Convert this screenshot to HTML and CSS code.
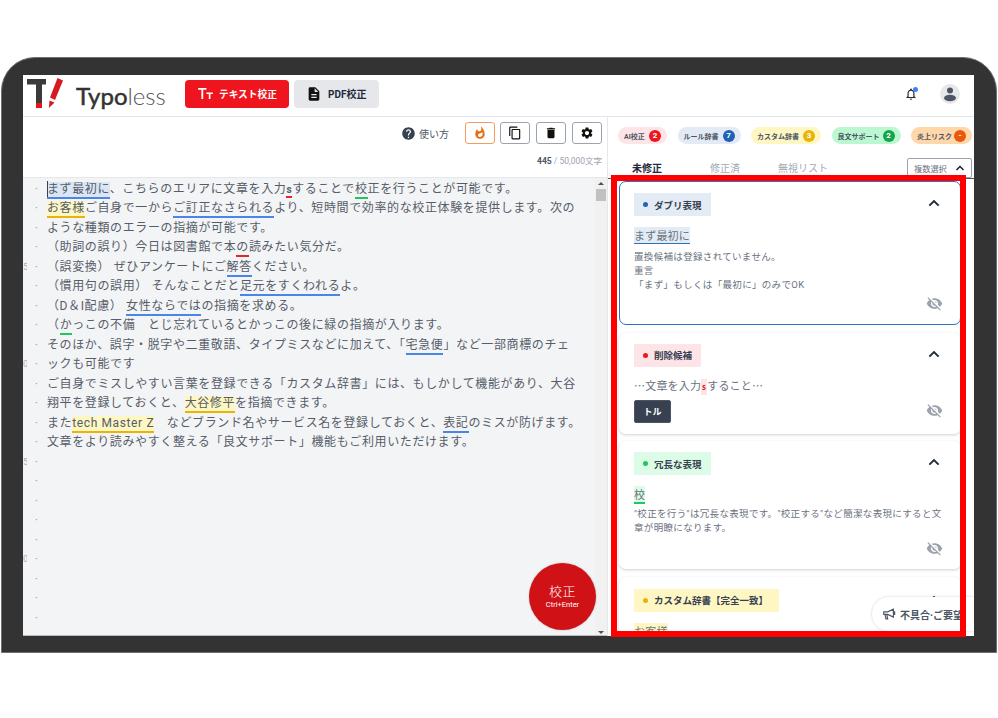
FILE: index.html
```html
<!DOCTYPE html>
<html lang="ja">
<head>
<meta charset="utf-8">
<title>Typoless</title>
<link rel="stylesheet" href="styles.css">
</head>
<body>
<svg class="defs" width="0" height="0" aria-hidden="true">
  <symbol id="i-doc" viewBox="0 0 24 24"><path d="M14 2H6c-1.1 0-2 .9-2 2v16c0 1.1.9 2 2 2h12c1.1 0 2-.9 2-2V8l-6-6zm2 16H8v-2h8v2zm0-4H8v-2h8v2zm-3-5V3.5L18.5 9H13z"/></symbol>
  <symbol id="i-help" viewBox="0 0 24 24"><path d="M12 2C6.48 2 2 6.48 2 12s4.48 10 10 10 10-4.48 10-10S17.52 2 12 2zm1 17h-2v-2h2v2zm2.07-7.75l-.9.92C13.45 12.9 13 13.5 13 15h-2v-.5c0-1.1.45-2.1 1.17-2.83l1.24-1.26c.37-.36.59-.86.59-1.41 0-1.1-.9-2-2-2s-2 .9-2 2H8c0-2.21 1.79-4 4-4s4 1.79 4 4c0 .88-.36 1.68-.93 2.25z"/></symbol>
  <symbol id="i-copy" viewBox="0 0 24 24"><path d="M16 1H4c-1.1 0-2 .9-2 2v14h2V3h12V1zm3 4H8c-1.1 0-2 .9-2 2v14c0 1.1.9 2 2 2h11c1.1 0 2-.9 2-2V7c0-1.1-.9-2-2-2zm0 16H8V7h11v14z"/></symbol>
  <symbol id="i-trash" viewBox="0 0 24 24"><path d="M6 19c0 1.1.9 2 2 2h8c1.1 0 2-.9 2-2V7H6v12zM19 4h-3.5l-1-1h-5l-1 1H5v2h14V4z"/></symbol>
  <symbol id="i-gear" viewBox="0 0 24 24"><path d="M19.14 12.94c.04-.3.06-.61.06-.94 0-.32-.02-.64-.07-.94l2.03-1.58c.18-.14.23-.41.12-.61l-1.92-3.32c-.12-.22-.37-.29-.59-.22l-2.39.96c-.5-.38-1.03-.7-1.62-.94l-.36-2.54c-.04-.24-.24-.41-.48-.41h-3.84c-.24 0-.43.17-.47.41l-.36 2.54c-.59.24-1.13.57-1.62.94l-2.39-.96c-.22-.08-.47 0-.59.22L2.74 8.87c-.12.21-.08.47.12.61l2.03 1.58c-.05.3-.09.63-.09.94s.02.64.07.94l-2.03 1.58c-.18.14-.23.41-.12.61l1.92 3.32c.12.22.37.29.59.22l2.39-.96c.5.38 1.03.7 1.62.94l.36 2.54c.05.24.24.41.48.41h3.84c.24 0 .44-.17.47-.41l.36-2.54c.59-.24 1.13-.56 1.62-.94l2.39.96c.22.08.47 0 .59-.22l1.92-3.32c.12-.22.07-.47-.12-.61l-2.01-1.58zM12 15.6c-1.98 0-3.6-1.62-3.6-3.6s1.62-3.6 3.6-3.6 3.6 1.62 3.6 3.6-1.62 3.6-3.6 3.6z"/></symbol>
  <symbol id="i-eye" viewBox="0 0 24 24"><path d="M12 7c2.76 0 5 2.24 5 5 0 .65-.13 1.26-.36 1.83l2.92 2.92c1.51-1.26 2.7-2.89 3.43-4.75-1.73-4.39-6-7.5-11-7.5-1.4 0-2.74.25-3.98.7l2.16 2.16C10.74 7.13 11.35 7 12 7zM2 4.27l2.28 2.28.46.46C3.08 8.3 1.78 10.02 1 12c1.73 4.39 6 7.5 11 7.5 1.55 0 3.03-.3 4.38-.84l.42.42L19.73 22 21 20.73 3.27 3 2 4.27zM7.53 9.8l1.55 1.55c-.05.21-.08.43-.08.65 0 1.66 1.34 3 3 3 .22 0 .44-.03.65-.08l1.55 1.55c-.67.33-1.41.53-2.2.53-2.76 0-5-2.24-5-5 0-.79.2-1.53.53-2.2zm4.31-.78l3.15 3.15.02-.16c0-1.66-1.34-3-3-3l-.17.01z"/></symbol>
  <symbol id="i-fire" viewBox="0 0 24 24"><path d="M13.5.67s.74 2.65.74 4.8c0 2.06-1.35 3.73-3.41 3.73-2.07 0-3.63-1.67-3.63-3.73l.03-.36C5.21 7.51 4 10.62 4 14c0 4.42 3.58 8 8 8s8-3.58 8-8C20 8.61 17.41 3.8 13.5.67zM11.71 19c-1.78 0-3.22-1.4-3.22-3.14 0-1.62 1.05-2.76 2.81-3.12 1.77-.36 3.6-1.21 4.62-2.58.39 1.29.59 2.65.59 4.04 0 2.65-2.15 4.8-4.8 4.8z"/></symbol>
  <symbol id="i-bell" viewBox="0 0 24 24"><path d="M12 22c1.1 0 2-.9 2-2h-4c0 1.1.9 2 2 2zm6-6v-5c0-3.07-1.63-5.64-4.5-6.32V4c0-.83-.67-1.5-1.5-1.5s-1.5.67-1.5 1.5v.68C7.64 5.36 6 7.92 6 11v5l-2 2v1h16v-1l-2-2zm-2 1H8v-6c0-2.48 1.51-4.5 4-4.5s4 2.02 4 4.5v6z"/></symbol>
  <symbol id="i-up" viewBox="0 0 24 24"><path d="M5 16l7-7 7 7" fill="none" stroke="currentColor" stroke-width="2.8"/></symbol>
</svg>

<div class="frame">
  <div class="screen">
    <header class="topbar">
      <div class="logo">
        <svg class="logo-mark" viewBox="0 0 38 32" width="38" height="32" aria-hidden="true">
          <path d="M0 1h19v5.500h-4V30H9V6.500H0z" fill="#3a3a3a"/>
          <rect x="9" y="25" width="6" height="5" fill="#e8141c"/>
          <path d="M30.500 0l5.500 2.500-8 19.500-5-2.500z" fill="#d81a20"/>
          <path d="M22.500 22.500l5 2-5.600 5.500z" fill="#d81a20"/>
        </svg>
        <span class="logo-text"><span class="logo-strong">Typo</span><span class="logo-light">less</span></span>
      </div>
      <button class="nav-btn nav-red">
        <svg class="tt" viewBox="0 0 16 12" width="15" height="11" aria-hidden="true"><path d="M0 0h9v2H5.500v10h-2V2H0zM9 5h7v1.500h-2.600V12h-1.800V6.500H9z" fill="#fff"/></svg>
        テキスト校正
      </button>
      <button class="nav-btn nav-gray">
        <svg class="ic16" aria-hidden="true"><use href="#i-doc"/></svg>
        PDF校正
      </button>
      <div class="top-right">
        <span class="bell">
          <svg class="ic14" aria-hidden="true"><use href="#i-bell"/></svg>
          <span class="bell-dot"></span>
        </span>
        <span class="avatar">
          <svg viewBox="0 0 20 20" width="20" height="20" aria-hidden="true"><circle cx="10" cy="6.500" r="3" fill="#4b5563"/><ellipse cx="10" cy="14" rx="6" ry="3.200" fill="#4b5563"/></svg>
        </span>
      </div>
    </header>

    <div class="workspace">
      <section class="left">
        <div class="toolbar">
          <div class="tool-row">
            <span class="help"><svg class="ic15" aria-hidden="true"><use href="#i-help"/></svg>使い方</span>
            <button class="tool tool-fire"><svg class="ic14" aria-hidden="true"><use href="#i-fire"/></svg></button>
            <button class="tool"><svg class="ic14" aria-hidden="true"><use href="#i-copy"/></svg></button>
            <button class="tool"><svg class="ic14" aria-hidden="true"><use href="#i-trash"/></svg></button>
            <button class="tool"><svg class="ic14" aria-hidden="true"><use href="#i-gear"/></svg></button>
          </div>
          <div class="count"><b>445</b> / 50,000文字</div>
        </div>
        <div class="editor-wrap">
          <div class="editor">
            <div class="row"><span class="ln"></span><span class="dot">·</span><span class="tx"><span class="caret"></span><span class="m-blue fill-blue">まず最初に</span>、こちらのエリアに文章を入力<span class="m-red small">s</span>することで<span class="m-green">校</span>正を行うことが可能です。</span></div>
            <div class="row"><span class="ln"></span><span class="dot">·</span><span class="tx"><span class="m-yellow">お客様</span>ご自身で一から<span class="m-blue">ご訂正なさられる</span>より、短時間で効率的な校正体験を提供します。次の</span></div>
            <div class="row"><span class="ln"></span><span class="dot">·</span><span class="tx">ような種類のエラーの指摘が可能です。</span></div>
            <div class="row"><span class="ln"></span><span class="dot">·</span><span class="tx">（助詞の誤り）今日は図書館で本<span class="m-red">の</span>読みたい気分だ。</span></div>
            <div class="row"><span class="ln">5</span><span class="dot">·</span><span class="tx">（誤変換） ぜひアンケートにご<span class="m-blue">解答</span>ください。</span></div>
            <div class="row"><span class="ln"></span><span class="dot">·</span><span class="tx">（慣用句の誤用） そんなことだと<span class="m-blue">足元をすくわれる</span>よ。</span></div>
            <div class="row"><span class="ln"></span><span class="dot">·</span><span class="tx">（D＆I配慮） <span class="m-blue">女性ならでは</span>の指摘を求める。</span></div>
            <div class="row"><span class="ln"></span><span class="dot">·</span><span class="tx">（<span class="m-green">か</span>っこの不備　とじ忘れているとかっこの後に緑の指摘が入ります。</span></div>
            <div class="row"><span class="ln"></span><span class="dot">·</span><span class="tx">そのほか、誤字・脱字や二重敬語、タイプミスなどに加えて、「<span class="m-blue">宅急便</span>」など一部商標のチェ</span></div>
            <div class="row"><span class="ln">0</span><span class="dot">·</span><span class="tx">ックも可能です</span></div>
            <div class="row"><span class="ln"></span><span class="dot">·</span><span class="tx">ご自身でミスしやすい言葉を登録できる「カスタム辞書」には、もしかして機能があり、大谷</span></div>
            <div class="row"><span class="ln"></span><span class="dot">·</span><span class="tx">翔平を登録しておくと、<span class="m-yellow">大谷修平</span>を指摘できます。</span></div>
            <div class="row"><span class="ln"></span><span class="dot">·</span><span class="tx">また<span class="m-yellow">tech Master Z</span>　などブランド名やサービス名を登録しておくと、<span class="m-blue">表記</span>のミスが防げます。</span></div>
            <div class="row"><span class="ln"></span><span class="dot">·</span><span class="tx">文章をより読みやすく整える「良文サポート」機能もご利用いただけます。</span></div>
            <div class="row"><span class="ln">5</span><span class="dot">·</span></div>
            <div class="row"><span class="ln"></span><span class="dot">·</span></div>
            <div class="row"><span class="ln"></span><span class="dot">·</span></div>
            <div class="row"><span class="ln"></span><span class="dot">·</span></div>
            <div class="row"><span class="ln"></span><span class="dot">·</span></div>
            <div class="row"><span class="ln">0</span><span class="dot">·</span></div>
            <div class="row"><span class="ln"></span><span class="dot">·</span></div>
            <div class="row"><span class="ln"></span><span class="dot">·</span></div>
            <div class="row"><span class="ln"></span><span class="dot">·</span></div>
          </div>
          <div class="scrollbar">
            <span class="arrow-up"></span>
            <span class="thumb"></span>
            <span class="arrow-down"></span>
          </div>
          <button class="run"><span class="run-main">校正</span><span class="run-sub">Ctrl+Enter</span></button>
        </div>
      </section>

      <aside class="right">
        <div class="chips">
          <span class="chip chip-red">AI校正<i>2</i></span>
          <span class="chip chip-blue">ルール辞書<i>7</i></span>
          <span class="chip chip-yellow">カスタム辞書<i>3</i></span>
          <span class="chip chip-green">良文サポート<i>2</i></span>
          <span class="chip chip-orange">炎上リスク<i>-</i></span>
        </div>
        <div class="tabs">
          <span class="tab tab-on">未修正</span>
          <span class="tab">修正済</span>
          <span class="tab">無視リスト</span>
          <button class="multi">複数選択<svg class="ic12" aria-hidden="true"><use href="#i-up"/></svg></button>
        </div>
        <div class="cards">
          <article class="card card-active card-1">
            <div class="card-head"><span class="badge badge-blue"><span class="bdot"></span>ダブリ表現</span><svg class="chev" aria-hidden="true"><use href="#i-up"/></svg></div>
            <div class="word"><span class="w-blue">まず最初に</span></div>
            <p class="note">置換候補は登録されていません。<br>重言<br>「まず」もしくは「最初に」のみでOK</p>
            <div class="card-foot"><svg class="eye" aria-hidden="true"><use href="#i-eye"/></svg></div>
          </article>
          <article class="card card-2">
            <div class="card-head"><span class="badge badge-red"><span class="bdot"></span>削除候補</span><svg class="chev" aria-hidden="true"><use href="#i-up"/></svg></div>
            <div class="word word-plain">…文章を入力<span class="w-del">s</span>すること…</div>
            <div class="card-foot foot-split"><button class="fix">トル</button><svg class="eye" aria-hidden="true"><use href="#i-eye"/></svg></div>
          </article>
          <article class="card card-3">
            <div class="card-head"><span class="badge badge-green"><span class="bdot"></span>冗長な表現</span><svg class="chev" aria-hidden="true"><use href="#i-up"/></svg></div>
            <div class="word"><span class="w-green">校</span></div>
            <p class="note note-tight">"校正を行う"は冗長な表現です。"校正する"など簡潔な表現にすると文章が明瞭になります。</p>
            <div class="card-foot"><svg class="eye" aria-hidden="true"><use href="#i-eye"/></svg></div>
          </article>
          <article class="card card-4">
            <div class="card-head"><span class="badge badge-yellow"><span class="bdot"></span>カスタム辞書【完全一致】</span><svg class="chev" aria-hidden="true"><use href="#i-up"/></svg></div>
            <div class="word"><span class="w-yellow">お客様</span></div>
          </article>
        </div>
        <button class="feedback">
          <svg viewBox="0 0 16 16" width="14" height="14" aria-hidden="true"><path d="M2 5.500h4.500L13 2.500v9L6.500 8.500H2zM3.500 8.500l1 5h2l-1-5M13 5.500h1.500v3H13" fill="none" stroke="#4b5563" stroke-width="1.300"/></svg>
          <span>不具合·ご要望</span>
        </button>
      </aside>
    </div>
  </div>
  <div class="redbox"></div>
</div>
</body>
</html>
```
FILE: styles.css
```css
* { box-sizing: border-box; }
html, body { margin: 0; padding: 0; background: #fff; }
body { font-family: Roboto, "Noto Sans CJK JP", sans-serif; color: #4b5563; height: 718px; overflow: hidden; }
button { font-family: inherit; cursor: pointer; }
.defs { position: absolute; }
svg { fill: currentColor; display: block; }

.frame {
  position: relative;
  margin: 57px 1px 0 1px;
  width: 996px;
  height: 596px;
  padding: 18px 22px 17px 22px;
  background: #333;
  border: 1px solid #6f6f6f;
  border-radius: 34px 34px 0 0;
}
.screen {
  width: 951px;
  height: 561px;
  margin: -1px 0 0 -1px;
  background: #fff;
  display: flex;
  flex-direction: column;
  overflow: hidden;
  position: relative;
}

.topbar {
  height: 42px;
  flex: none;
  display: flex;
  align-items: center;
  border-bottom: 1px solid #e2e5ee;
  padding: 0 14px 4px 4px;
}
.logo { display: flex; align-items: center; width: 158px; }
.logo-mark { flex: none; margin-top: 1px; }
.logo-text { font-family: Lato, sans-serif; font-size: 24px; margin-left: 11px; color: #333; margin-top: 3px; }
.logo-strong { font-weight: 400; -webkit-text-stroke: .5px #333; }
.logo-light { font-weight: 300; color: #555; }
.nav-btn {
  height: 28px;
  border: 0;
  border-radius: 4px;
  display: flex;
  align-items: center;
  font-size: 10px;
  font-weight: 700;
  padding: 0;
}
.nav-red { width: 104px; background: #ee151e; color: #fff; gap: 6px; padding-left: 13px; margin-right: 5px; font-size: 9.7px; }
.nav-gray { width: 85px; background: #e5e7eb; color: #1f2937; gap: 6px; padding-left: 12px; }
.nav-gray svg { color: #111; }
.tt { flex: none; }
.ic16 { width: 16px; height: 16px; }
.ic15 { width: 15px; height: 15px; }
.ic14 { width: 14px; height: 14px; }
.ic12 { width: 12px; height: 12px; }
.top-right { margin-left: auto; display: flex; align-items: center; gap: 22px; }
.bell { position: relative; color: #1f2937; }
.bell-dot { position: absolute; top: 0; right: 0; width: 5px; height: 5px; border-radius: 50%; background: #3b82f6; }
.avatar { width: 20px; height: 20px; border-radius: 50%; background: #e5e7eb; }

.workspace { flex: 1; display: flex; min-height: 0; }
.left { width: 584px; flex: none; display: flex; flex-direction: column; }
.toolbar {
  height: 61px;
  flex: none;
  padding: 5px 5px 0 0;
  border-bottom: 1px solid #e5e7eb;
}
.tool-row { display: flex; align-items: center; justify-content: flex-end; gap: 6px; }
.help { display: flex; align-items: center; gap: 3px; font-size: 10px; color: #4b5563; margin-right: 10px; }
.help svg { color: #374151; }
.tool {
  width: 30px;
  height: 22px;
  padding: 0;
  background: #fff;
  border: 1px solid #9ca3af;
  border-radius: 3px;
  display: flex;
  align-items: center;
  justify-content: center;
  color: #111;
}
.tool-fire { border-color: #f59e5b; color: #ea6a12; margin-right: -1px; }
.count { margin-top: 10px; text-align: right; font-size: 8.5px; color: #9ca3af; }
.count b { color: #4b5563; font-weight: 700; }

.editor-wrap { flex: 1; display: flex; min-height: 0; background: #f3f4f6; position: relative; border-bottom: 1px solid #bbb; }
.editor { flex: 1; overflow: hidden; padding-top: 1.5px; }
.row { display: flex; height: 19.5px; line-height: 19.5px; font-size: 12px; letter-spacing: .62px; white-space: nowrap; color: #565d68; }
.ln { width: 4px; flex: none; font-size: 9px; letter-spacing: 0; color: #a8aeb8; overflow: hidden; }
.dot { width: 20px; flex: none; padding-left: 8px; color: #888; font-size: 10px; letter-spacing: 0; }
.tx { display: block; position: relative; }
.caret { position: absolute; left: 0; top: 1px; width: 1px; height: 16px; background: #374151; }
.m-blue { border-bottom: 2px solid #4a86e8; padding-bottom: 1px; }
.fill-blue { background: #dbe6f5; }
.m-red { border-bottom: 2px solid #e8242c; padding-bottom: 1px; }
.m-green { border-bottom: 2px solid #22c55e; padding-bottom: 1px; }
.m-yellow { border-bottom: 2px solid #eab308; background: #fef7c3; padding-bottom: 1px; }
.small { font-size: 10px; font-weight: 700; }

.scrollbar { width: 12px; flex: none; background: #f1f1f1; display: flex; flex-direction: column; align-items: center; padding: 4px 0 0; }
.arrow-up { width: 0; height: 0; border: 3px solid transparent; border-bottom: 3px solid #505050; border-top: 0; }
.thumb { width: 10px; height: 12px; background: #c1c1c1; margin-top: 4px; }
.arrow-down { width: 0; height: 0; border: 3px solid transparent; border-top: 3px solid #505050; border-bottom: 0; margin-top: auto; margin-bottom: 1px; }
.run {
  position: absolute;
  left: 506px;
  top: 385px;
  width: 67px;
  height: 67px;
  border: 0;
  border-radius: 50%;
  background: #d01216;
  color: #fff;
  display: flex;
  flex-direction: column;
  align-items: center;
  justify-content: center;
  padding: 0;
  box-shadow: 0 0 2px rgba(0,0,0,.25);
}
.run-main { font-size: 13px; line-height: 17px; font-weight: 300; letter-spacing: .5px; }
.run-sub { font-size: 7.5px; line-height: 10px; }

.right { flex: 1; min-width: 0; position: relative; display: flex; flex-direction: column; border-left: 1px solid #e5e7eb; }
.chips { display: flex; padding: 10px 0 0 10px; height: 41px; flex: none; gap: 10.5px; }
.chip { height: 17px; border-radius: 9px; display: flex; align-items: center; justify-content: space-between; font-size: 7px; font-weight: 700; color: #4b5563; padding: 0 6px; white-space: nowrap; flex: none; }
.chip i { font-style: normal; width: 12px; height: 12px; border-radius: 50%; color: #fff; font-size: 8px; font-weight: 700; text-align: center; line-height: 12px; }
.chip-red { background: #fde4e6; width: 49px; }
.chip-red i { background: #ee151e; }
.chip-blue { background: #e3eaf6; width: 63px; }
.chip-blue i { background: #1f62b5; }
.chip-yellow { background: #fef7c3; width: 70px; }
.chip-yellow i { background: #eab308; }
.chip-green { background: #bbf7d0; width: 69px; }
.chip-green i { background: #16a34a; }
.chip-orange { background: #fed7aa; width: 61px; }
.chip-orange i { background: #ea580c; }

.tabs { height: 21px; flex: none; display: flex; align-items: center; border-bottom: 1px solid #555; padding: 0 2px 2px 24px; position: relative; }
.tab { font-size: 10px; color: #a3a9b3; }
.tab:nth-child(1) { width: 78px; }
.tab:nth-child(2) { width: 68px; }
.tab-on { color: #1f2937; font-weight: 700; }
.multi {
  margin-left: auto;
  width: 65px;
  height: 20px;
  margin-bottom: -2px;
  background: #fff;
  border: 1px solid #9ca3af;
  border-radius: 2px;
  display: flex;
  align-items: center;
  justify-content: space-between;
  padding: 0 5px 0 6px;
  font-size: 8.2px;
  color: #6b7280;
}
.multi svg { color: #111827; }

.cards { flex: 1; min-height: 0; overflow: hidden; padding: 2px 13px 0 11px; display: flex; flex-direction: column; gap: 7.5px; }
.card { background: #fff; border-radius: 7px; padding: 11px 15px 12px; box-shadow: 0 1px 3px rgba(30,40,70,.22); flex: none; position: relative; display: flex; flex-direction: column; }
.card-active { border: 1px solid #2f6fc0; padding: 11px 14px 12px; box-shadow: none; }
.card-1 { height: 144px; }
.card-2 { height: 101px; }
.card-3 { height: 128px; }
.card-4 { height: 100px; padding-top: 12px; }
.card-head { display: flex; justify-content: space-between; align-items: center; height: 23px; flex: none; }
.badge { height: 23px; display: flex; align-items: center; font-size: 9.5px; font-weight: 700; color: #374151; padding: 0 9px; gap: 6px; white-space: nowrap; }
.card-4 .badge { padding-right: 11px; }
.bdot { width: 5px; height: 5px; border-radius: 50%; }
.badge-blue { background: #e3ebf5; }
.badge-blue .bdot { background: #2563b8; }
.badge-red { background: #fde4e6; }
.badge-red .bdot { background: #ee151e; }
.badge-green { background: #dcfce7; }
.badge-green .bdot { background: #22c55e; }
.badge-yellow { background: #fef7c3; }
.badge-yellow .bdot { background: #eab308; }
.chev { width: 16px; height: 16px; color: #1f2937; margin: -3px 4px 0 0; flex: none; }
.word { margin-top: 11px; font-family: "Noto Sans CJK JP", sans-serif; font-size: 11px; line-height: 16px; letter-spacing: .2px; color: #6b7280; flex: none; }
.w-blue { background: #e3ebf5; border-bottom: 1px solid #2f6fc0; display: inline-block; }
.w-green { background: #dcfce7; border-bottom: 2px solid #22c55e; display: inline-block; }
.w-yellow { background: #fef7c3; display: inline-block; }
.w-del { background: #fde4e6; color: #ee151e; font-size: 8px; font-weight: 700; display: inline-block; width: 6px; text-align: center; }
.word-plain { margin-top: 10px; }
.note { margin: 6px 0 0; font-size: 9.5px; line-height: 14px; color: #6b7280; letter-spacing: .33px; }
.note-tight { margin-top: 3px; }
.card-foot { margin-top: auto; display: flex; justify-content: flex-end; }
.foot-split { justify-content: space-between; align-items: center; margin-top: 5px; }
.eye { width: 17px; height: 17px; color: #9ca3af; margin-right: 3px; }
.foot-split .eye { margin-top: -2px; }
.fix { width: 37px; height: 23px; background: #374151; color: #fff; border: 1px solid #4b5563; border-radius: 2px; font-size: 9px; font-weight: 700; padding: 0; }

.feedback {
  position: absolute;
  left: 264px;
  top: 480px;
  width: 110px;
  height: 34px;
  border: 0;
  border-radius: 17px 0 0 17px;
  background: #fff;
  box-shadow: 0 0 3px rgba(0,0,0,.18);
  display: flex;
  align-items: center;
  gap: 4px;
  padding: 0 0 0 10px;
  font-size: 10px;
  font-weight: 700;
  color: #4b5563;
  white-space: nowrap;
  overflow: hidden;
}

.redbox { position: absolute; left: 609px; top: 117px; width: 355px; height: 462px; border: 6px solid #f00; pointer-events: none; }
```
